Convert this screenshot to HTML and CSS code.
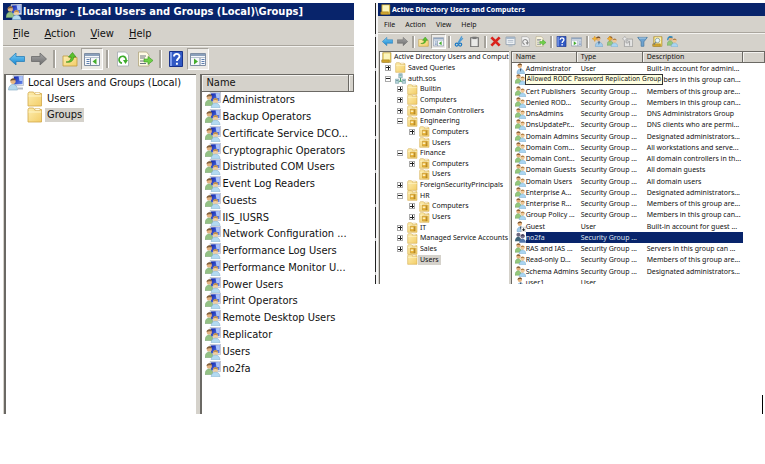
FILE: index.html
```
<!DOCTYPE html>
<html lang="en">
<head>
<meta charset="utf-8">
<title>Local and domain groups</title>
<link rel="stylesheet" href="styles.css">
</head>
<body>
<svg class="defs" aria-hidden="true">
  <defs>
    <linearGradient id="gBlue" x1="0" y1="0" x2="0" y2="1"><stop offset="0" stop-color="#7fd0f8"/><stop offset="1" stop-color="#1384cf"/></linearGradient>
    <linearGradient id="gGrey" x1="0" y1="0" x2="0" y2="1"><stop offset="0" stop-color="#a8a8a8"/><stop offset="1" stop-color="#6c6c6c"/></linearGradient>
    <linearGradient id="gFold" x1="0" y1="0" x2="1" y2="1"><stop offset="0" stop-color="#fdeeb0"/><stop offset="1" stop-color="#f3cd68"/></linearGradient>
    <linearGradient id="gMon" x1="0" y1="0" x2="1" y2="1"><stop offset="0" stop-color="#0c1fa8"/><stop offset="1" stop-color="#6b8df0"/></linearGradient>
  </defs>
  <symbol id="back" viewBox="0 0 16 16"><path d="M0.5 8 7 2v3.500h8.500v5H7V14z" fill="url(#gBlue)" stroke="#2a7fb8" stroke-width=".8"/></symbol>
  <symbol id="fwd" viewBox="0 0 16 16"><path d="M15.500 8 9 2v3.500H.5v5H9V14z" fill="url(#gGrey)" stroke="#6a6a6a" stroke-width=".8"/></symbol>
  <symbol id="up" viewBox="0 0 16 16"><path d="M1 5h5l1 1.500h8V15H1z" fill="url(#gFold)" stroke="#c09a3c" stroke-width=".8"/><path d="M4 11c3 0 5-2 5.200-5H6.500L10.500 1.500 14 6h-2.300C11.500 10 8.500 12 4 11z" fill="#5cc22c" stroke="#2f8a18" stroke-width=".6"/></symbol>
  <symbol id="pane" viewBox="0 0 16 16"><path d="M.5 2.500h15v12H.5z" fill="#f6f8fb" stroke="#7f8ea3"/><path d="M1 3h14v2H1z" fill="#8ba0bb"/><path d="M1 6.500h14" stroke="#b5c0cf"/><path d="M2.500 8.500h3M2.500 10.500h3M2.500 12.500h3" stroke="#5d7fae"/><path d="M6.500 7v7.500" stroke="#7f8ea3"/><path d="M12.500 7.500v6L8.500 10.500z" fill="#44ad2c"/></symbol>
  <symbol id="paneR" viewBox="0 0 16 16"><path d="M.5 2.500h15v12H.5z" fill="#f6f8fb" stroke="#7f8ea3"/><path d="M1 3h14v2H1z" fill="#8ba0bb"/><path d="M1 6.500h14" stroke="#b5c0cf"/><path d="M11.500 8.500h3M11.500 10.500h3M11.500 12.500h3" stroke="#5d7fae"/><path d="M10 7v7.500" stroke="#7f8ea3"/><path d="M4 7.500v6l4-3z" fill="#44ad2c"/></symbol>
  <symbol id="refresh" viewBox="0 0 16 16"><path d="M2.500 1h8l3 3v11h-11z" fill="#fff" stroke="#a3a9b0" stroke-width=".8"/><path d="M7 12.200A3.500 3.500 0 1 1 10.800 10" fill="none" stroke="#3eac2c" stroke-width="1.700"/><path d="M8 9h5l-2.500 4z" fill="#3eac2c"/></symbol>
  <symbol id="export" viewBox="0 0 16 16"><path d="M1.500 1h8l2.500 3v11H1.500z" fill="#fffbe6" stroke="#b1a67e" stroke-width=".8"/><path d="M3 5h6M3 7h5M3 10h4M3 12.500h6" stroke="#5b6573" stroke-width=".9"/><path d="M7 8h4V5.500L16 9.500 11 13.500V11H7z" fill="#6fd047" stroke="#369a20" stroke-width=".6"/></symbol>
  <symbol id="help" viewBox="0 0 16 16"><path d="M1.500.5h13v15h-13z" fill="#3159c4" stroke="#17318b"/><path d="M2 1h2v14H2z" fill="#7e9ceb"/><path d="M6 5.500C6 2 11.500 2 11.500 5.300 11.500 7.500 8.900 7.500 8.900 10M8.900 11.700v2" fill="none" stroke="#fff" stroke-width="1.900"/></symbol>
  <symbol id="folder" viewBox="0 0 16 16"><path d="M1 2.500 2 1h4.500l1 1.500H14.500V15H1z" fill="url(#gFold)" stroke="#d2a746" stroke-width=".8"/><path d="M8 1.500h5v2H8z" fill="#fffbe9" stroke="#d2a746" stroke-width=".5"/><path d="M1.500 5h12.800" stroke="#fff4c6"/></symbol>
  <symbol id="ou" viewBox="0 0 16 16"><use href="#folder"/><path d="M5 6h7v7H5z" fill="#efb93a" stroke="#b5892e" stroke-width=".8"/><path d="M5.500 8h4v2h-4z" fill="#fff7cf"/><path d="M10.500 7v6" stroke="#8f681c"/></symbol>
  <symbol id="book" viewBox="0 0 16 16"><path d="M2.500 1h12v14h-12z" fill="#eed361" stroke="#9a7b25" stroke-width=".8"/><path d="M4 2h9v9H4z" fill="#fcf5be"/><path d="M1 11.500h11V15H1z" fill="#d5a92f" stroke="#947222" stroke-width=".7"/></symbol>
  <symbol id="mon" viewBox="0 0 16 16"><path d="M5 .5 15.500 0v10.500L6 11z" fill="#dfe3ec" stroke="#a7aec0" stroke-width=".6"/><path d="M6 1.500 14.500 1v8L6 9.500z" fill="url(#gMon)"/><path d="M10.500 1.300 14.500 1v5L11.500 6z" fill="#a9c1f8"/></symbol>
  <symbol id="usermon" viewBox="0 0 16 16"><use href="#mon"/><circle cx="5" cy="6.300" r="2.600" fill="#e7b680"/><path d="M2.400 6C2 2.500 8 2.500 7.600 5.300 6 5.500 4 4.700 2.400 6z" fill="#6d5036"/><path d="M.5 15c0-7.500 9-7.500 9 0z" fill="#b4d8ec" stroke="#7fa8c5" stroke-width=".6"/><path d="M9.500 13.500H15" stroke="#b4bac4" stroke-width="2"/></symbol>
  <symbol id="grpmon" viewBox="0 0 16 16"><use href="#mon"/><circle cx="4.300" cy="5" r="2.600" fill="#e3b380"/><path d="M1.600 5C1.500 1.500 7 1.500 6.900 4.200 5 4.300 3.500 3.700 1.600 5z" fill="#80603d"/><path d="M0 13.500c0-7.500 8-7.500 8 0z" fill="#94c284" stroke="#6f9f68" stroke-width=".5"/><circle cx="10.500" cy="8.700" r="2.500" fill="#f1cfa2"/><path d="M8 8.500c0-3.500 5.300-3.500 5 0-1.800-.5-3-1-5 0z" fill="#bf914f"/><path d="M6.200 15.800c0-6.300 8.600-6.300 8.800 0z" fill="#b3daf1" stroke="#7aa8c8" stroke-width=".5"/></symbol>
  <symbol id="group" viewBox="0 0 16 16"><circle cx="5" cy="4" r="3" fill="#e6b27b"/><path d="M2 3.500C2-.5 8-.5 8 3.500 6 3 4 2.500 2 3.500z" fill="#8d643a"/><path d="M0 13.500c0-9 9-9 9.500 0z" fill="#93c87b" stroke="#67985c" stroke-width=".6"/><circle cx="11" cy="7" r="3" fill="#efc897"/><path d="M8 6.500c0-4 6.200-4 6 0-2-.5-4-1-6 0z" fill="#b58449"/><path d="M6 15.700c0-7.500 9.500-7.500 10 0z" fill="#a9d5f2" stroke="#6a9cc2" stroke-width=".6"/></symbol>
  <symbol id="groupSel" viewBox="0 0 16 16"><circle cx="5" cy="4" r="3" fill="#6e6980"/><path d="M0 13.500c0-9 9-9 9.500 0z" fill="#3e6478"/><circle cx="11" cy="6.500" r="3" fill="#777490"/><path d="M8 6.500c0-5 6.500-5 6.200 0-2-.5-4-1.500-6.200 0z" fill="#4a4461"/><path d="M6 15.700c0-8 9.500-8 10 0z" fill="#5277ac"/></symbol>
  <symbol id="user" viewBox="0 0 16 16"><circle cx="7" cy="4" r="3.200" fill="#e6b27b"/><path d="M3.800 4C3.500-.5 10.500-.5 10.200 3.500 8 3 6 2.500 3.800 4z" fill="#75522f"/><path d="M3 15.500c-1-9 10-9 11 0z" fill="#a3cdec" stroke="#5f93bd" stroke-width=".6"/><path d="m7 8 1 5 1.500-5z" fill="#38506e"/></symbol>
  <symbol id="guest" viewBox="0 0 16 16"><use href="#user"/><path d="M9 9h7v7H9z" fill="#fff" stroke="#999" stroke-width=".6"/><path d="M12.500 10v3M11 12.500 12.500 14.500l1.500-2z" fill="#111" stroke="#111"/></symbol>
  <symbol id="domain" viewBox="0 0 16 16"><path d="M5.500 1h5v6h-5zM.5 9h5v6h-5zM10.500 9h5v6h-5z" fill="#b7d6dc" stroke="#6d969e" stroke-width=".8"/><path d="M8 7v5M5.500 12h5" stroke="#45a26b" stroke-width="1.500"/><path d="M6.500 3h3M1.500 11h3M11.500 11h3" stroke="#527f88"/></symbol>
  <symbol id="cut" viewBox="0 0 16 16"><path d="M11.500.5 6 10M13 3 7 9.500" stroke="#4c9ad4" stroke-width="1.800"/><circle cx="4" cy="12.500" r="2.200" fill="none" stroke="#1878c4" stroke-width="1.700"/><circle cx="9" cy="12.500" r="2.200" fill="none" stroke="#1878c4" stroke-width="1.700"/></symbol>
  <symbol id="clip" viewBox="0 0 16 16"><path d="M2.500 2.500h11v13h-11z" fill="#e9e9e7" stroke="#666" stroke-width="1.500"/><path d="M5 1h6v3.500H5z" fill="#777"/></symbol>
  <symbol id="del" viewBox="0 0 16 16"><path d="m2 2 12 12M14 2 2 14" stroke="#d9231d" stroke-width="4"/></symbol>
  <symbol id="props" viewBox="0 0 16 16"><path d="M1.500 1.500h13v11h-13z" fill="#eef1f4" stroke="#7d8fa3"/><path d="M2 2h12v2H2z" fill="#90a7bf"/><path d="M4 6.500h8M4 9h8" stroke="#9cabba"/><path d="M5 13h6v2.500H5z" fill="#b8c1ca"/></symbol>
  <symbol id="refreshG" viewBox="0 0 16 16"><path d="M2.500 1h8l3 3v11h-11z" fill="#f2f2f2" stroke="#999" stroke-width=".8"/><path d="M7 12.200A3.500 3.500 0 1 1 10.800 10" fill="none" stroke="#888" stroke-width="1.500"/><path d="M8 9h5l-2.500 4z" fill="#888"/></symbol>
  <symbol id="newuser" viewBox="0 0 16 16"><use href="#user" x="2"/><path d="m4 0 1.200 2.800L8 4 5.200 5.200 4 8 2.800 5.200 0 4l2.800-1.200z" fill="#f5b72c" stroke="#d4861a" stroke-width=".6"/></symbol>
  <symbol id="newgroup" viewBox="0 0 16 16"><use href="#group"/><path d="m4 0 1.200 2.800L8 4 5.200 5.200 4 8 2.800 5.200 0 4l2.800-1.200z" fill="#f5b72c" stroke="#d4861a" stroke-width=".6"/></symbol>
  <symbol id="newou" viewBox="0 0 16 16"><path d="M3.500 4.500h12v11h-12z" fill="#e4e4e3" stroke="#909090"/><path d="M6 7h3v3H6zM11 7v7" fill="#fff" stroke="#858585"/><path d="m4 0 1.200 2.800L8 4 5.200 5.200 4 8 2.800 5.200 0 4l2.800-1.200z" fill="#ededed" stroke="#999" stroke-width=".6"/></symbol>
  <symbol id="filter" viewBox="0 0 16 16"><path d="M1 2h14L10 8.500V15H6V8.500z" fill="#6ea3cf" stroke="#3f719d"/><path d="M3 3h10" stroke="#c4dff2"/></symbol>
  <symbol id="find" viewBox="0 0 16 16"><use href="#book"/><circle cx="8" cy="6.500" r="3.300" fill="#e3f4fa" stroke="#7d8c8c"/><path d="m5.500 9-3 3.500" stroke="#6f7c7c" stroke-width="1.500"/></symbol>
  <symbol id="addto" viewBox="0 0 16 16"><use href="#group"/><path d="M1 6C1 1 5 0 8 2" fill="none" stroke="#318fc5" stroke-width="2"/></symbol>
</svg>

<main class="desktop">
  <section class="window local" aria-label="lusrmgr">
    <header class="titlebar"><svg class="icon"><use href="#grpmon"/></svg><h1>lusrmgr - [Local Users and Groups (Local)\Groups]</h1></header>
    <nav class="menubar"><button><u>F</u>ile</button><button><u>A</u>ction</button><button><u>V</u>iew</button><button><u>H</u>elp</button></nav>
    <div class="toolbar">
      <button aria-label="Back"><svg class="icon"><use href="#back"/></svg></button>
      <button aria-label="Forward"><svg class="icon"><use href="#fwd"/></svg></button>
      <span class="sep"></span>
      <button aria-label="Up one level"><svg class="icon"><use href="#up"/></svg></button>
      <button class="pressed" aria-label="Show console tree"><svg class="icon"><use href="#pane"/></svg></button>
      <span class="sep"></span>
      <button aria-label="Refresh"><svg class="icon"><use href="#refresh"/></svg></button>
      <button aria-label="Export list"><svg class="icon"><use href="#export"/></svg></button>
      <span class="sep"></span>
      <button aria-label="Help"><svg class="icon"><use href="#help"/></svg></button>
      <button class="pressed" aria-label="Show action pane"><svg class="icon"><use href="#paneR"/></svg></button>
    </div>
    <div class="panes">
      <div class="pane tree-pane">
        <ul class="tree">
          <li><svg class="icon"><use href="#usermon"/></svg><span class="label">Local Users and Groups (Local)</span></li>
          <li class="l1"><svg class="icon"><use href="#folder"/></svg><span class="label">Users</span></li>
          <li class="l1"><svg class="icon"><use href="#folder"/></svg><span class="label current">Groups</span></li>
        </ul>
      </div>
      <div class="pane list-pane">
        <table class="list">
          <colgroup><col class="c-name"><col></colgroup>
          <thead><tr><th>Name</th><th></th></tr></thead>
          <tbody>
            <tr><td><svg class="icon"><use href="#grpmon"/></svg>Administrators</td><td></td></tr>
            <tr><td><svg class="icon"><use href="#grpmon"/></svg>Backup Operators</td><td></td></tr>
            <tr><td><svg class="icon"><use href="#grpmon"/></svg>Certificate Service DCO...</td><td></td></tr>
            <tr><td><svg class="icon"><use href="#grpmon"/></svg>Cryptographic Operators</td><td></td></tr>
            <tr><td><svg class="icon"><use href="#grpmon"/></svg>Distributed COM Users</td><td></td></tr>
            <tr><td><svg class="icon"><use href="#grpmon"/></svg>Event Log Readers</td><td></td></tr>
            <tr><td><svg class="icon"><use href="#grpmon"/></svg>Guests</td><td></td></tr>
            <tr><td><svg class="icon"><use href="#grpmon"/></svg>IIS_IUSRS</td><td></td></tr>
            <tr><td><svg class="icon"><use href="#grpmon"/></svg>Network Configuration ...</td><td></td></tr>
            <tr><td><svg class="icon"><use href="#grpmon"/></svg>Performance Log Users</td><td></td></tr>
            <tr><td><svg class="icon"><use href="#grpmon"/></svg>Performance Monitor U...</td><td></td></tr>
            <tr><td><svg class="icon"><use href="#grpmon"/></svg>Power Users</td><td></td></tr>
            <tr><td><svg class="icon"><use href="#grpmon"/></svg>Print Operators</td><td></td></tr>
            <tr><td><svg class="icon"><use href="#grpmon"/></svg>Remote Desktop Users</td><td></td></tr>
            <tr><td><svg class="icon"><use href="#grpmon"/></svg>Replicator</td><td></td></tr>
            <tr><td><svg class="icon"><use href="#grpmon"/></svg>Users</td><td></td></tr>
            <tr><td><svg class="icon"><use href="#grpmon"/></svg>no2fa</td><td></td></tr>
          </tbody>
        </table>
      </div>
    </div>
  </section>

  <div class="side">
    <section class="window domain" aria-label="Active Directory">
      <header class="titlebar"><svg class="icon"><use href="#book"/></svg><h1>Active Directory Users and Computers</h1></header>
      <nav class="menubar"><button>File</button><button>Action</button><button>View</button><button>Help</button></nav>
      <div class="toolbar">
        <button aria-label="Back"><svg class="icon"><use href="#back"/></svg></button>
        <button aria-label="Forward"><svg class="icon"><use href="#fwd"/></svg></button>
        <span class="sep"></span>
        <button aria-label="Up one level"><svg class="icon"><use href="#up"/></svg></button>
        <button class="pressed" aria-label="Show console tree"><svg class="icon"><use href="#pane"/></svg></button>
        <span class="sep"></span>
        <button aria-label="Cut"><svg class="icon"><use href="#cut"/></svg></button>
        <button aria-label="Paste"><svg class="icon"><use href="#clip"/></svg></button>
        <span class="sep"></span>
        <button aria-label="Delete"><svg class="icon"><use href="#del"/></svg></button>
        <button aria-label="Properties"><svg class="icon"><use href="#props"/></svg></button>
        <button aria-label="Refresh"><svg class="icon"><use href="#refreshG"/></svg></button>
        <button aria-label="Export list"><svg class="icon"><use href="#export"/></svg></button>
        <span class="sep"></span>
        <button aria-label="Help"><svg class="icon"><use href="#help"/></svg></button>
        <button aria-label="Show action pane"><svg class="icon"><use href="#paneR"/></svg></button>
        <span class="sep"></span>
        <button aria-label="New user"><svg class="icon"><use href="#newuser"/></svg></button>
        <button aria-label="New group"><svg class="icon"><use href="#newgroup"/></svg></button>
        <button aria-label="New organizational unit"><svg class="icon"><use href="#newou"/></svg></button>
        <button aria-label="Filter"><svg class="icon"><use href="#filter"/></svg></button>
        <button aria-label="Find"><svg class="icon"><use href="#find"/></svg></button>
        <button aria-label="Add to group"><svg class="icon"><use href="#addto"/></svg></button>
      </div>
      <div class="panes">
        <div class="pane tree-pane">
          <ul class="tree">
            <li><svg class="icon"><use href="#book"/></svg><span class="label">Active Directory Users and Comput</span></li>
            <li class="l1"><button class="tw plus" aria-label="Expand"></button><svg class="icon"><use href="#folder"/></svg><span class="label">Saved Queries</span></li>
            <li class="l1"><button class="tw" aria-label="Collapse"></button><svg class="icon"><use href="#domain"/></svg><span class="label">auth.sos</span></li>
            <li class="l2"><button class="tw plus" aria-label="Expand"></button><svg class="icon"><use href="#folder"/></svg><span class="label">Builtin</span></li>
            <li class="l2"><button class="tw plus" aria-label="Expand"></button><svg class="icon"><use href="#folder"/></svg><span class="label">Computers</span></li>
            <li class="l2"><button class="tw plus" aria-label="Expand"></button><svg class="icon"><use href="#ou"/></svg><span class="label">Domain Controllers</span></li>
            <li class="l2"><button class="tw" aria-label="Collapse"></button><svg class="icon"><use href="#ou"/></svg><span class="label">Engineering</span></li>
            <li class="l3"><button class="tw plus" aria-label="Expand"></button><svg class="icon"><use href="#ou"/></svg><span class="label">Computers</span></li>
            <li class="l3 leaf"><svg class="icon"><use href="#ou"/></svg><span class="label">Users</span></li>
            <li class="l2"><button class="tw" aria-label="Collapse"></button><svg class="icon"><use href="#ou"/></svg><span class="label">Finance</span></li>
            <li class="l3"><button class="tw plus" aria-label="Expand"></button><svg class="icon"><use href="#ou"/></svg><span class="label">Computers</span></li>
            <li class="l3 leaf"><svg class="icon"><use href="#ou"/></svg><span class="label">Users</span></li>
            <li class="l2"><button class="tw plus" aria-label="Expand"></button><svg class="icon"><use href="#folder"/></svg><span class="label">ForeignSecurityPrincipals</span></li>
            <li class="l2"><button class="tw" aria-label="Collapse"></button><svg class="icon"><use href="#ou"/></svg><span class="label">HR</span></li>
            <li class="l3"><button class="tw plus" aria-label="Expand"></button><svg class="icon"><use href="#ou"/></svg><span class="label">Computers</span></li>
            <li class="l3"><button class="tw plus" aria-label="Expand"></button><svg class="icon"><use href="#ou"/></svg><span class="label">Users</span></li>
            <li class="l2"><button class="tw plus" aria-label="Expand"></button><svg class="icon"><use href="#ou"/></svg><span class="label">IT</span></li>
            <li class="l2"><button class="tw plus" aria-label="Expand"></button><svg class="icon"><use href="#folder"/></svg><span class="label">Managed Service Accounts</span></li>
            <li class="l2"><button class="tw plus" aria-label="Expand"></button><svg class="icon"><use href="#ou"/></svg><span class="label">Sales</span></li>
            <li class="l2 leaf"><svg class="icon"><use href="#folder"/></svg><span class="label current">Users</span></li>
          </ul>
        </div>
        <div class="pane list-pane">
          <table class="list">
            <colgroup><col class="c-name"><col class="c-type"><col class="c-desc"><col></colgroup>
            <thead><tr><th>Name</th><th>Type</th><th>Description</th><th></th></tr></thead>
            <tbody>
              <tr><td><svg class="icon"><use href="#user"/></svg>Administrator</td><td>User</td><td>Built-in account for admini...</td><td></td></tr>
              <tr><td class="tipped"><svg class="icon"><use href="#group"/></svg><span class="tip">Allowed RODC Password Replication Group</span></td><td></td><td class="behind">bers in this group can...</td><td></td></tr>
              <tr><td><svg class="icon"><use href="#group"/></svg>Cert Publishers</td><td>Security Group ...</td><td>Members of this group are...</td><td></td></tr>
              <tr><td><svg class="icon"><use href="#group"/></svg>Denied ROD...</td><td>Security Group ...</td><td>Members in this group can...</td><td></td></tr>
              <tr><td><svg class="icon"><use href="#group"/></svg>DnsAdmins</td><td>Security Group ...</td><td>DNS Administrators Group</td><td></td></tr>
              <tr><td><svg class="icon"><use href="#group"/></svg>DnsUpdatePr...</td><td>Security Group ...</td><td>DNS clients who are permi...</td><td></td></tr>
              <tr><td><svg class="icon"><use href="#group"/></svg>Domain Admins</td><td>Security Group ...</td><td>Designated administrators...</td><td></td></tr>
              <tr><td><svg class="icon"><use href="#group"/></svg>Domain Com...</td><td>Security Group ...</td><td>All workstations and serve...</td><td></td></tr>
              <tr><td><svg class="icon"><use href="#group"/></svg>Domain Cont...</td><td>Security Group ...</td><td>All domain controllers in th...</td><td></td></tr>
              <tr><td><svg class="icon"><use href="#group"/></svg>Domain Guests</td><td>Security Group ...</td><td>All domain guests</td><td></td></tr>
              <tr><td><svg class="icon"><use href="#group"/></svg>Domain Users</td><td>Security Group ...</td><td>All domain users</td><td></td></tr>
              <tr><td><svg class="icon"><use href="#group"/></svg>Enterprise A...</td><td>Security Group ...</td><td>Designated administrators...</td><td></td></tr>
              <tr><td><svg class="icon"><use href="#group"/></svg>Enterprise R...</td><td>Security Group ...</td><td>Members of this group are...</td><td></td></tr>
              <tr><td><svg class="icon"><use href="#group"/></svg>Group Policy ...</td><td>Security Group ...</td><td>Members in this group can...</td><td></td></tr>
              <tr><td><svg class="icon"><use href="#guest"/></svg>Guest</td><td>User</td><td>Built-in account for guest ...</td><td></td></tr>
              <tr class="selected"><td><svg class="icon"><use href="#groupSel"/></svg>no2fa</td><td>Security Group ...</td><td></td><td></td></tr>
              <tr><td><svg class="icon"><use href="#group"/></svg>RAS and IAS ...</td><td>Security Group ...</td><td>Servers in this group can ...</td><td></td></tr>
              <tr><td><svg class="icon"><use href="#group"/></svg>Read-only D...</td><td>Security Group ...</td><td>Members of this group are...</td><td></td></tr>
              <tr><td><svg class="icon"><use href="#group"/></svg>Schema Admins</td><td>Security Group ...</td><td>Designated administrators...</td><td></td></tr>
              <tr><td><svg class="icon"><use href="#user"/></svg>user1</td><td>User</td><td></td><td></td></tr>
            </tbody>
          </table>
        </div>
      </div>
    </section>
    <span class="caret"></span>
  </div>
</main>
</body>
</html>
```
FILE: styles.css
```
* { box-sizing: border-box; }

body {
  margin: 0;
  background: #fff;
  color: #111;
  font-family: "DejaVu Sans Condensed", "DejaVu Sans", sans-serif;
}

.defs { position: absolute; width: 0; height: 0; }

.desktop {
  display: grid;
  grid-template-columns: 351fr 390fr;
  column-gap: 21px;
  padding: 3px 0 0 3px;
}

.window {
  display: flex;
  flex-direction: column;
  background: #d5d2cb;
  overflow: hidden;
}

.icon { width: 16px; height: 16px; flex: none; display: block; }

button {
  font: inherit;
  color: inherit;
  background: none;
  border: 0;
  padding: 0;
}

.titlebar, .menubar, .toolbar { flex: none; }

.titlebar {
  display: flex;
  align-items: center;
  gap: 1px;
  height: 17px;
  padding-left: 3px;
  background: #08246b;
  color: #fff;
}
.titlebar h1 { margin: 0; font-size: 11px; white-space: nowrap; }

.menubar {
  display: flex;
  align-items: center;
  gap: 15px;
  height: 26px;
  padding: 3px 10px 0;
  border-bottom: 1px solid #aaa69e;
}

.toolbar {
  display: flex;
  align-items: center;
  height: 25px;
  padding: 0 0 1px 3px;
  border-top: 1px solid #f4f3f0;
}
.toolbar button {
  display: flex;
  align-items: center;
  justify-content: center;
  width: 22px;
  height: 22px;
}
.toolbar .pressed {
  background: #eceae6;
  border: 1px solid;
  border-color: #a5a29b #fff #fff #a5a29b;
}
.sep { width: 9px; height: 18px; display: flex; justify-content: center; }
.sep::before { content: ""; width: 2px; background: #a5a29b; border-right: 1px solid #fff; }

.panes { display: grid; flex: 1; min-height: 0; padding: 3px 0 0 1px; }
.pane {
  background: #fff;
  border: solid #6b6964;
  border-width: 1px 0 0 2px;
  overflow: hidden;
}

.tree { list-style: none; margin: 0; padding: 0; display: grid; grid-auto-rows: 1fr; }
.tree li { display: flex; align-items: center; white-space: nowrap; min-height: 0; }
.label { padding: 0 2px; }
.current { background: #d5d2cb; }

.list { width: 100%; border-collapse: separate; border-spacing: 0; table-layout: fixed; }
.list th {
  background: #d5d2cb;
  border: solid #6b6964;
  border-width: 0 1px 1px 0;
  box-shadow: inset 1px 1px #f4f3f0;
  font-weight: normal;
  text-align: left;
  padding: 0 4px;
}
.list td { padding: 0; white-space: nowrap; vertical-align: middle; }
.list .icon { display: inline-block; vertical-align: top; }

/* Local users and groups */
.local { height: 411px; font-size: 11px; line-height: 14px; }
.local .panes { grid-template-columns: 193fr 154fr; column-gap: 4px; }
.local .tree { grid-auto-rows: 16px; padding-left: 2px; }
.local .l1 { padding-left: 19px; }
.local .tree-pane .icon { margin-right: 2px; }
.local .list { height: 302px; }
.local .list thead tr { height: 17px; }
.local .c-name { width: 147px; }
.local td { line-height: 16px; }
.local td:first-child { padding-left: 3px; }
.local td .icon { margin-right: 1px; }

/* Directory users and computers */
.side { display: flex; flex-direction: column; }
.domain {
  height: 281px;
  padding-left: 3px;
  font-family: "Noto Sans", sans-serif;
  font-size: 7px;
  line-height: 10px;
  background:
    repeating-linear-gradient(#222 0 31px, #ccc 31px 34px) 0 0 / 1px 100% no-repeat,
    linear-gradient(#f6f6f6, #f6f6f6) 0 0 / 3px 100% no-repeat,
    #d5d2cb;
}
.domain .icon { width: 11px; height: 11px; }
.domain .titlebar { height: 13px; padding-left: 2px; gap: 1px; }
.domain .titlebar h1 { font-size: 7px; }
.domain .menubar { height: 17px; padding: 2px 6px 0; gap: 10px; }
.domain .toolbar { height: 16px; padding: 0 0 0 2px; }
.domain .toolbar button { width: 15px; height: 15px; }
.domain .sep { width: 6px; height: 12px; }
.domain .panes { grid-template-columns: 130fr 255fr; column-gap: 2px; padding-top: 2px; }
.domain .pane { border-width: 1px 0 0 1px; }
.domain .tree { height: 213px; padding-left: 1px; }
.domain .l1 { padding-left: 4px; }
.domain .l2 { padding-left: 16px; }
.domain .l3 { padding-left: 28px; }
.domain .leaf.l2 { padding-left: 26px; }
.domain .leaf.l3 { padding-left: 38px; }
.tw {
  width: 6px;
  height: 6px;
  margin-right: 4px;
  flex: none;
  border: 1px solid #aaa;
  background: linear-gradient(#222, #222) center / 4px 1px no-repeat;
}
.tw.plus {
  background:
    linear-gradient(#222, #222) center / 4px 1px no-repeat,
    linear-gradient(#222, #222) center / 1px 4px no-repeat;
}
.domain .list { height: 236px; }
.domain .list thead tr { height: 11px; }
.domain .c-name { width: 65px; }
.domain .c-type { width: 66px; }
.domain .c-desc { width: 100px; }
.domain td { padding-left: 4px; line-height: 11px; }
.domain td:first-child { padding-left: 3px; }
.domain .behind { text-align: right; padding-right: 2px; }
.selected td { background: #08246b; color: #dfe3ee; }
.selected td:first-child { background: linear-gradient(#08246b, #08246b) 14px 0 no-repeat; }
.selected td:last-child { background: none; }
.tipped { position: relative; }
.tip {
  position: absolute;
  left: 13px;
  top: 0;
  z-index: 1;
  padding: 0 1px;
  font-family: "DejaVu Sans Condensed", "DejaVu Sans", sans-serif;
  line-height: 9px;
  background: #ffffe1;
  border: 1px solid #333;
}

.caret { align-self: flex-end; width: 1px; height: 19px; margin: 111px 2px 0 0; background: #000; }
```
